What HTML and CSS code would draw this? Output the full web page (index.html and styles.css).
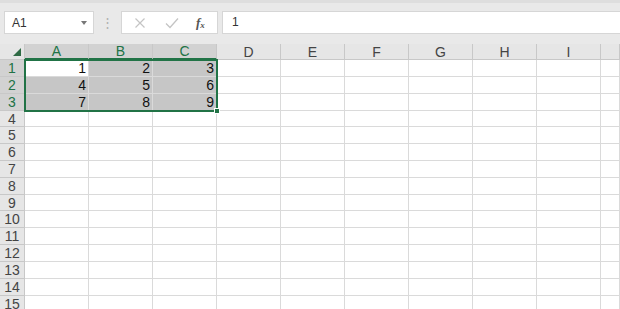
FILE: index.html
```html
<!DOCTYPE html>
<html lang="en">
    <head>
        <meta charset="UTF-8" />
        <title>Sheet1</title>
        <link rel="stylesheet" href="styles.css">
    </head>
    <body>
        <div class="formula-bar">
            <div class="name-box">
                <span>A1</span>
                <span class="caret"></span>
            </div>
            <div class="grip">⋮</div>
            <div class="fx-buttons">
                <svg width="12" height="12" viewBox="0 0 12 12"><path d="M1.5 1.5 L10.5 10.5 M10.5 1.5 L1.5 10.5" stroke="#c4c4c4" stroke-width="1.2" fill="none"/></svg>
                <svg width="14" height="12" viewBox="0 0 14 12"><path d="M1 6.5 L5 10.5 L13 1.5" stroke="#c4c4c4" stroke-width="1.3" fill="none"/></svg>
                <span class="fx">f<sub>x</sub></span>
            </div>
            <div class="formula-input">1</div>
        </div>

        <div class="sheet">
            <div class="grid">
                <div class="corner"><span class="tri"></span></div>
                <div class="col-head sel">A</div>
                <div class="col-head sel">B</div>
                <div class="col-head sel">C</div>
                <div class="col-head">D</div>
                <div class="col-head">E</div>
                <div class="col-head">F</div>
                <div class="col-head">G</div>
                <div class="col-head">H</div>
                <div class="col-head">I</div>
                <div class="col-head"></div>
            </div>
            <div class="grid" id="rows"></div>
            <div class="selection"><span class="handle"></span></div>
        </div>

        <script>
    const data = [[1, 2, 3], [4, 5, 6], [7, 8, 9]];
    const rows = document.getElementById('rows');
    for (let r = 1; r <= 15; r++) {
      // rows 4 and 9 are a pixel shorter, as in the sheet
      const short = (r === 4 || r === 9) ? ' short' : '';
      const head = document.createElement('div');
      head.className = 'row-head' + (r <= 3 ? ' sel' : '') + short;
      head.textContent = r;
      rows.appendChild(head);
      for (let c = 0; c < 10; c++) {
        const cell = document.createElement('div');
        cell.className = 'cell' + short;
        if (r <= 3 && c < 3) {
          cell.textContent = data[r - 1][c];
          if (!(r === 1 && c === 0)) cell.classList.add('shade');
        }
        rows.appendChild(cell);
      }
    }
  </script>
    </body>
</html>
```

FILE: styles.css
```css
:root {
  --green: #217346;
  --bar: #e9e9e9;
  --head: #e6e6e6;
  --head-sel: #d2d2d2;
  --grid: #dadada;
  --head-line: #c8c8c8;
  --font: 'Liberation Sans', Arial, sans-serif;
}

* {
  box-sizing: border-box;
  margin: 0;
  padding: 0;
}

body {
  font-family: var(--font);
  background: #ffffff;
  color: #222;
  width: 620px;
  height: 309px;
  overflow: hidden;
}

.formula-bar {
  background: var(--bar);
  border-top: 3px solid #dedede;
  height: 44px;
  display: flex;
  align-items: flex-start;
  padding: 8px 0 0 4px;
}

.name-box {
  width: 90px;
  height: 23px;
  background: #fff;
  border: 1px solid #d6d6d6;
  display: flex;
  align-items: center;
  justify-content: space-between;
  padding: 0 6px 0 7px;
  font-size: 12px;
  color: #333;
}

.caret {
  width: 0;
  height: 0;
  border-left: 3.5px solid transparent;
  border-right: 3.5px solid transparent;
  border-top: 4px solid #777;
}

.grip {
  width: 27px;
  text-align: center;
  color: #b0b0b0;
  font-size: 13px;
  line-height: 23px;
}

.fx-buttons {
  width: 97px;
  height: 23px;
  background: #fff;
  border: 1px solid #d6d6d6;
  display: flex;
  align-items: center;
  padding: 0 6px 0 12px;
}

.fx-buttons svg:first-child {
  margin-right: 19px;
}

.fx-buttons svg:nth-child(2) {
  margin-right: 17px;
}

.fx {
  font-family: 'Liberation Serif', serif;
  font-style: italic;
  font-weight: bold;
  font-size: 13px;
  color: #555;
  line-height: 1;
}

.fx sub {
  font-size: 9px;
  vertical-align: -1px;
}

.formula-input {
  flex: 1;
  height: 23px;
  margin-left: 4px;
  background: #fff;
  border: 1px solid #d6d6d6;
  border-right: none;
  font-size: 12px;
  line-height: 21px;
  padding-left: 9px;
  color: #333;
}

.sheet {
  position: relative;
}

.grid {
  display: grid;
  grid-template-columns: 25px repeat(9, 64px) 1fr;
  font-size: 14px;
}

.corner,
.col-head {
  height: 16px;
  background: var(--head);
  border-right: 1px solid var(--head-line);
  border-bottom: 1px solid var(--head-line);
}

.corner {
  position: relative;
}

.tri {
  position: absolute;
  right: 3px;
  bottom: 3px;
  width: 0;
  height: 0;
  border-left: 8px solid transparent;
  border-bottom: 8px solid #2f6b45;
}

.col-head {
  text-align: center;
  line-height: 16px;
  color: #444;
}

.col-head.sel {
  background: var(--head-sel);
  color: var(--green);
  border-bottom: 2px solid var(--green);
  line-height: 15px;
}

.row-head {
  height: 17px;
  background: var(--head);
  border-right: 1px solid var(--head-line);
  border-bottom: 1px solid var(--head-line);
  line-height: 17px;
  text-align: center;
  color: #444;
}

.row-head.sel {
  background: var(--head-sel);
  color: var(--green);
}

.cell {
  height: 17px;
  border-right: 1px solid var(--grid);
  border-bottom: 1px solid var(--grid);
  text-align: right;
  padding-right: 2px;
  line-height: 17px;
  color: #111;
}

.short {
  height: 16px;
  line-height: 16px;
}

.cell.shade {
  background: #c6c6c6;
}

.selection {
  position: absolute;
  left: 24px;
  top: 15px;
  width: 194px;
  height: 53px;
  border: 2px solid var(--green);
  pointer-events: none;
}

.handle {
  position: absolute;
  right: -4px;
  bottom: -4px;
  width: 6px;
  height: 6px;
  background: var(--green);
  border: 1px solid #fff;
}
```
